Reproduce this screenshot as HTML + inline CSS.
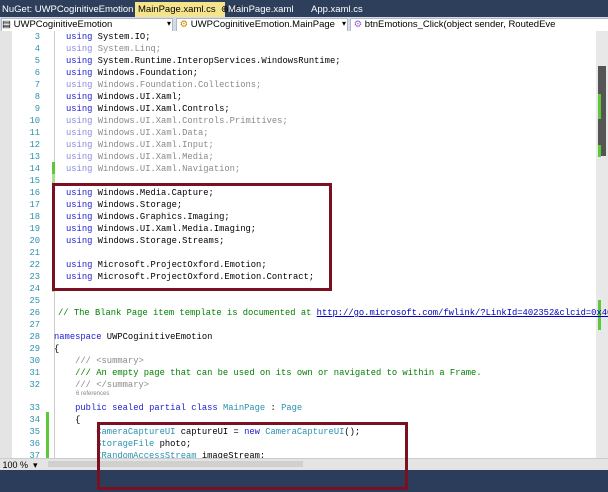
<!DOCTYPE html>
<html><head><style>
body{margin:0;width:608px;height:492px;overflow:hidden;background:#fff;position:relative;font-family:"Liberation Sans",sans-serif}
.a{position:absolute}
.tabs{left:0;top:0;width:608px;height:17px;background:#2e3f5c}
.tab{top:2px;height:15px;font-size:9.5px;color:#fff;line-height:15px;white-space:nowrap}
.tool{left:0;top:17px;width:608px;height:14px;background:#d5dbe6}
.dd{top:18px;height:12px;background:#fff;border:1px solid #b0b8c8;font-size:9.5px;line-height:12px;color:#000;overflow:hidden;white-space:nowrap}
.code{left:0;top:31px;width:596px;height:427px;background:#fff}
.gut{left:0;top:31px;width:12px;height:427px;background:#e4e4e4}
.ln{position:absolute;left:14px;width:26px;text-align:right;font:8.8px/12px "Liberation Mono",monospace;color:#2b91af}
.cl{position:absolute;left:66px;font:8.8px/12px "Liberation Mono",monospace;white-space:pre;color:#000}
.k{color:#2020d0}.fk{color:#8a8ae0}.f{color:#8a8a8a}.t{color:#2b91af}.c{color:#008000}.u{color:#0000c0;text-decoration:underline}
.box{border:3px solid #7a1020;box-sizing:border-box}
.gr{background:#5ec83a;width:3px}
</style></head><body>
<div class="a tabs"></div>
<div class="a tab" style="left:2px">NuGet: UWPCoginitiveEmotion</div>
<div class="a tab" style="left:135px;width:90px;background:#f5e48e;color:#000;padding-left:3px;box-sizing:border-box">MainPage.xaml.cs &nbsp;⊕ ✕</div>
<div class="a tab" style="left:228px">MainPage.xaml</div>
<div class="a tab" style="left:311px">App.xaml.cs</div>
<div class="a tool"></div>
<div class="a dd" style="left:1px;width:170px">&#9636; UWPCoginitiveEmotion</div>
<div class="a" style="left:167px;top:19px;font-size:8px">▾</div>
<div class="a dd" style="left:176px;width:170px">&nbsp;<span style="color:#c80">⚙</span> UWPCoginitiveEmotion.MainPage</div>
<div class="a" style="left:342px;top:19px;font-size:8px">▾</div>
<div class="a dd" style="left:350px;width:257px">&nbsp;<span style="color:#96c">⚙</span> btnEmotions_Click(object sender, RoutedEve</div>
<div class="a code"></div>
<div class="a gut"></div>
<div class="a" style="left:54px;top:31px;width:1px;height:427px;background:#ccc"></div>
<div class="a" style="left:596px;top:31px;width:12px;height:427px;background:#e8e8e8"></div>
<div class="a" style="left:598px;top:66px;width:8px;height:90px;background:#555"></div>
<div class="a gr" style="left:598px;top:94px;height:25px"></div>
<div class="a gr" style="left:598px;top:145px;height:12px"></div>
<div class="a gr" style="left:598px;top:300px;height:30px"></div>
<div class="a gr" style="left:52px;top:162px;height:12px"></div>
<div class="a gr" style="left:52px;top:174px;height:118px;background:#a8e090"></div>
<div class="a gr" style="left:46px;top:412px;height:46px"></div>
<div id="L"></div>
<div class="a box" style="left:52px;top:183px;width:280px;height:108px"></div>
<div class="a" style="left:0;top:458px;width:608px;height:12px;background:#e4e4e4;border-top:1px solid #ccc;font-size:9px;line-height:12px">&nbsp;100 % &nbsp;▾</div>
<div class="a" style="left:48px;top:461px;width:255px;height:6px;background:#d0d0d0"></div>
<div class="a" style="left:0;top:470px;width:608px;height:22px;background:#2b3d5a"></div>
<div class="a box" style="left:97px;top:422px;width:311px;height:68px"></div>
<script>
var rows=[
[3,'<span class="k">using</span> System.IO;'],
[4,'<span class="fk">using</span> <span class="f">System.Linq;</span>'],
[5,'<span class="k">using</span> System.Runtime.InteropServices.WindowsRuntime;'],
[6,'<span class="k">using</span> Windows.Foundation;'],
[7,'<span class="fk">using</span> <span class="f">Windows.Foundation.Collections;</span>'],
[8,'<span class="k">using</span> Windows.UI.Xaml;'],
[9,'<span class="k">using</span> Windows.UI.Xaml.Controls;'],
[10,'<span class="fk">using</span> <span class="f">Windows.UI.Xaml.Controls.Primitives;</span>'],
[11,'<span class="fk">using</span> <span class="f">Windows.UI.Xaml.Data;</span>'],
[12,'<span class="fk">using</span> <span class="f">Windows.UI.Xaml.Input;</span>'],
[13,'<span class="fk">using</span> <span class="f">Windows.UI.Xaml.Media;</span>'],
[14,'<span class="fk">using</span> <span class="f">Windows.UI.Xaml.Navigation;</span>'],
[15,''],
[16,'<span class="k">using</span> Windows.Media.Capture;'],
[17,'<span class="k">using</span> Windows.Storage;'],
[18,'<span class="k">using</span> Windows.Graphics.Imaging;'],
[19,'<span class="k">using</span> Windows.UI.Xaml.Media.Imaging;'],
[20,'<span class="k">using</span> Windows.Storage.Streams;'],
[21,''],
[22,'<span class="k">using</span> Microsoft.ProjectOxford.Emotion;'],
[23,'<span class="k">using</span> Microsoft.ProjectOxford.Emotion.Contract;'],
[24,''],[25,''],
[26,'<span class="c">// The Blank Page item template is documented at <span class="u">http://go.microsoft.com/fwlink/?LinkId=402352&amp;clcid=0x409</span></span>',-8],
[27,''],
[28,'<span class="k">namespace</span> UWPCoginitiveEmotion',-12],
[29,'{',-12],
[30,'    <span class="f">///</span> <span class="f">&lt;summary&gt;</span>',-12],
[31,'    <span class="c">/// An empty page that can be used on its own or navigated to within a Frame.</span>',-12],
[32,'    <span class="f">/// &lt;/summary&gt;</span>',-12],
[33,'    <span class="k">public</span> <span class="k">sealed</span> <span class="k">partial</span> <span class="k">class</span> <span class="t">MainPage</span> : <span class="t">Page</span>',-12],
[34,'    {',-12],
[35,'        <span class="t">CameraCaptureUI</span> captureUI = <span class="k">new</span> <span class="t">CameraCaptureUI</span>();',-12],
[36,'        <span class="t">StorageFile</span> photo;',-12],
[37,'        <span class="t">IRandomAccessStream</span> imageStream;',-12]];
var h='';
rows.forEach(function(r){var top=31+(r[0]-3)*12+(r[0]>=33?11:0);
h+='<div class="ln" style="top:'+top+'px">'+r[0]+'</div><div class="cl" style="top:'+top+'px;left:'+(66+(r[2]||0))+'px">'+r[1]+'</div>';});
h+='<div class="a" style="left:76px;top:391px;font-size:6px;color:#888">6 references</div>';
document.getElementById('L').innerHTML=h;
</script>
</body></html>
